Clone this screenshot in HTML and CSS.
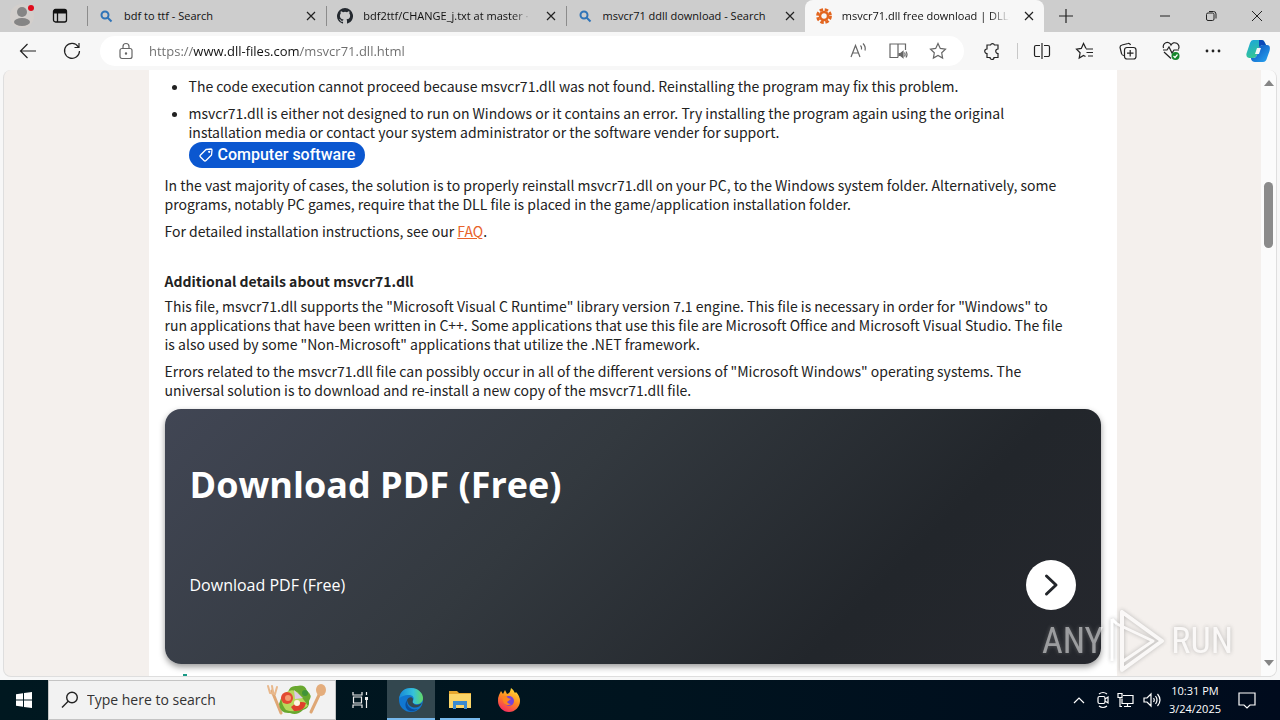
FILE: index.html
```html
<!DOCTYPE html>
<html lang="en">
<head>
<meta charset="utf-8">
<title>msvcr71.dll free download | DLL-files.com</title>
<link rel="stylesheet" href="styles.css">
</head>
<body>
<header class="tabstrip">
  <div class="profile">
    <button class="icon-btn avatar" aria-label="Profile"><svg width="28" height="28" viewBox="0 0 28 28"><circle cx="14" cy="14" r="12" fill="#d3cfcc"/><circle cx="14" cy="10" r="5" fill="#858585"/><ellipse cx="14" cy="20" rx="8" ry="4" fill="#858585"/><circle cx="23" cy="6" r="3" fill="#e00b1c"/></svg></button>
    <button class="icon-btn" aria-label="Tab actions"><svg width="16" height="16" viewBox="0 0 16 16" fill="none" stroke="#111" stroke-width="1.3"><rect x="1.500" y="1.500" width="13" height="12.500" rx="2"/><path d="M5.500 5v9"/><path d="M2 3.500h12" stroke-width="4"/></svg></button>
  </div>
  <nav class="tabs" aria-label="Tabs">
    <div class="tab"><svg class="fav" viewBox="0 0 16 16" fill="none" stroke="#2f74b8" stroke-width="2"><circle cx="7" cy="7" r="3.500"/><path d="M9.500 9.500l4 4"/></svg><button class="tab-title">bdf to ttf - Search</button><button class="close" aria-label="Close tab"><svg viewBox="0 0 10 10"><path d="M1 1l8 8M9 1l-8 8"/></svg></button></div>
    <div class="tab"><svg class="fav" viewBox="0 0 16 16"><path fill="#24292f" d="M8 0a8 8 0 0 0-2.530 15.590c.4.070.55-.17.55-.38v-1.490c-2.230.48-2.700-.95-2.700-.95-.36-.92-.89-1.170-.89-1.170-.73-.5.060-.49.060-.49.800.06 1.220.83 1.220.83.72 1.230 1.880.87 2.340.67.070-.52.280-.87.510-1.070-1.780-.2-3.640-.89-3.640-3.950 0-.87.310-1.590.82-2.150-.08-.2-.36-1.020.08-2.120 0 0 .67-.22 2.200.82a7.600 7.600 0 0 1 4 0c1.530-1.040 2.200-.82 2.200-.82.44 1.100.16 1.920.08 2.120.51.56.82 1.270.82 2.150 0 3.070-1.870 3.750-3.650 3.950.29.250.54.730.54 1.480v2.190c0 .21.150.46.550.38A8 8 0 0 0 8 0z"/></svg><button class="tab-title faded">bdf2ttf/CHANGE_j.txt at master ·</button><button class="close" aria-label="Close tab"><svg viewBox="0 0 10 10"><path d="M1 1l8 8M9 1l-8 8"/></svg></button></div>
    <div class="tab"><svg class="fav" viewBox="0 0 16 16" fill="none" stroke="#2f74b8" stroke-width="2"><circle cx="7" cy="7" r="3.500"/><path d="M9.500 9.500l4 4"/></svg><button class="tab-title">msvcr71 ddll download - Search</button><button class="close" aria-label="Close tab"><svg viewBox="0 0 10 10"><path d="M1 1l8 8M9 1l-8 8"/></svg></button></div>
    <div class="tab active"><svg class="fav" viewBox="0 0 16 16" fill="none" stroke="#e2651f"><circle cx="8" cy="8" r="4" stroke-width="2.500"/><circle cx="8" cy="8" r="6.500" stroke-width="2.800" stroke-dasharray="3.400 1.700"/></svg><button class="tab-title faded">msvcr71.dll free download | DLL-</button><button class="close" aria-label="Close tab"><svg viewBox="0 0 10 10"><path d="M1 1l8 8M9 1l-8 8"/></svg></button></div>
  </nav>
  <button class="new-tab" aria-label="New tab"><svg width="16" height="16" viewBox="0 0 16 16" stroke="#222" stroke-width="1.200"><path d="M8 1v14M1 8h14"/></svg></button>
  <div class="window-controls">
    <button aria-label="Minimize"><svg viewBox="0 0 12 12"><path d="M1 6h10"/></svg></button>
    <button aria-label="Restore"><svg viewBox="0 0 12 12"><rect x="1.500" y="3" width="7.500" height="7.500" rx="1.500"/><path d="M4 1.500h4.500a2.500 2.500 0 0 1 2.500 2.500v4.500"/></svg></button>
    <button aria-label="Close"><svg viewBox="0 0 12 12"><path d="M1 1l10 10M11 1L1 11"/></svg></button>
  </div>
</header>

<div class="toolbar">
  <button class="tool" aria-label="Back"><svg viewBox="0 0 20 20"><path d="M18 10H2.500M9.500 3l-7 7 7 7"/></svg></button>
  <button class="tool reload" aria-label="Refresh"><svg viewBox="0 0 20 20"><path d="M16.300 5.800a7.500 7.500 0 1 0 1.200 4.200M17 2v4.500h-4.500"/></svg></button>
  <div class="address">
    <svg class="lock" viewBox="0 0 20 20"><rect x="4" y="7.500" width="12" height="10" rx="2"/><path d="M7 7.500V5.500a3 3 0 0 1 6 0v2"/><circle cx="10" cy="12.500" r=".6" fill="#666"/></svg>
    <input class="url" type="text" aria-label="Address" value="https://www.dll-files.com/msvcr71.dll.html">
    <button aria-label="Read aloud"><svg viewBox="0 0 20 20"><path d="M3 16L7.500 4.500 12 16M4.500 12h6M12.500 4.500q1.500 1.500 1 4M15 2.500q3 3 2 7"/></svg></button>
    <button aria-label="Immersive reader"><svg viewBox="0 0 20 20"><path d="M10 16.500H2V3h8v13.500M10 3h7.500v6"/><path d="M11 12.500h1.500l2.500-2v6l-2.500-2H11z" fill="#666"/><path d="M16.500 11.500q1.200 2 0 4M18 10.500q2 3 0 6"/></svg></button>
    <button aria-label="Add to favorites"><svg viewBox="0 0 20 20"><path d="M10 2.500l2.300 4.900 5.200.7-3.800 3.700.9 5.300-4.600-2.600-4.600 2.600.9-5.300-3.800-3.700 5.200-.7z"/></svg></button>
  </div>
  <div class="tools">
    <button aria-label="Extensions"><svg viewBox="0 0 20 20"><path d="M5 4h3.500a2.200 2.200 0 0 1 4 0H16v4a2.200 2.200 0 1 0 0 4.500v4h-4a2 2 0 0 1-4 0H5v-4a2.200 2.200 0 1 1 0-4.500z"/></svg></button>
    <span class="rule"></span>
    <button aria-label="Split screen"><svg viewBox="0 0 20 20"><path d="M8 4.500H4a1.500 1.500 0 0 0-1.500 1.500v8A1.500 1.500 0 0 0 4 15.500h4M12 4.500h4a1.500 1.500 0 0 1 1.500 1.500v8a1.500 1.500 0 0 1-1.500 1.500h-4M10 2v16"/></svg></button>
    <button aria-label="Favorites"><svg viewBox="0 0 20 20"><path d="M11 7.500L8.500 2.500 6.300 7.400l-4.800.7 3.600 3.700-.9 5.300 4.300-2.600 2 1M11 8h7M11.500 11.500H18M13 15h5"/></svg></button>
    <button aria-label="Collections"><svg viewBox="0 0 20 20"><path d="M6 14.500a2.500 2.500 0 0 1-2.500-2L2 6.500A2.500 2.500 0 0 1 4 4l6-1.500a2 2 0 0 1 2.500 1.500"/><rect x="6.500" y="6.500" width="11.500" height="11.500" rx="2.500"/><path d="M12.200 9v6.500M9 12.200h6.500"/></svg></button>
    <button aria-label="Browser essentials"><svg viewBox="0 0 20 20"><path d="M2 9h4l2-3 3 6 2-3h5M2.500 7a4 4 0 0 1 7.500-3 4 4 0 0 1 7.500 4M3 11l7 6.500"/><circle cx="14.500" cy="15" r="4" fill="#16852b" stroke="none"/><path d="M12.500 15l1.500 1.500 2.500-3" stroke="#fff"/></svg></button>
    <button aria-label="Settings and more"><svg viewBox="0 0 20 20"><g fill="#222" stroke="none"><circle cx="4" cy="10" r="1.400"/><circle cx="10" cy="10" r="1.400"/><circle cx="16" cy="10" r="1.400"/></g></svg></button>
    <button class="copilot" aria-label="Copilot"><svg viewBox="0 0 24 24"><defs><linearGradient id="cpa" x2=".5" y2="1"><stop stop-color="#1aa5df"/><stop offset="1" stop-color="#38c88f"/></linearGradient><linearGradient id="cpb" x2="1" y2="1"><stop stop-color="#0b48b8"/><stop offset="1" stop-color="#28a8f2"/></linearGradient></defs><path d="M7 1h9q2 0 3 3l1 2h-4q-2 0-3 3l-2 7q-1 3-4 3H3Q-1 18 1 13L4 4q1-3 3-3z" fill="url(#cpa)"/><path d="M13 1h3q2 0 3 3l1 2h-4l-3 2z" fill="#0b48b8"/><path d="M17 23H9q-3 0-4-3v-1h3q2 0 3-3l2-7q1-3 4-3h4q4 0 2.500 6L21 19q-1 4-4 4z" fill="url(#cpb)"/><path d="M11 9h4l-2 6H9z" fill="#f7f7f7"/></svg></button>
  </div>
</div>

<div class="viewport">
  <main class="page">
    <ul>
      <li>The code execution cannot proceed because msvcr71.dll was not found. Reinstalling the program may fix this problem.</li>
      <li>msvcr71.dll is either not designed to run on Windows or it contains an error. Try installing the program again using the original<br> installation media or contact your system administrator or the software vender for support.<br>
        <a class="tag" href="#"><svg width="14" height="14" viewBox="0 0 14 14" fill="none" stroke="#fff" stroke-width="1.300" stroke-linejoin="round"><path d="M7 1.500l5-.5q1 0 1 1l-.5 5L7 12.500q-1 1-2 0L1.500 9q-1-1 0-2z"/><circle cx="10.200" cy="3.800" r=".5"/></svg>Computer software</a></li>
    </ul>
    <p>In the vast majority of cases, the solution is to properly reinstall msvcr71.dll on your PC, to the Windows system folder. Alternatively, some<br> programs, notably PC games, require that the DLL file is placed in the game/application installation folder.</p>
    <p>For detailed installation instructions, see our <a class="faq" href="#">FAQ</a>.</p>
    <h2>Additional details about msvcr71.dll</h2>
    <p>This file, msvcr71.dll supports the "Microsoft Visual C Runtime" library version 7.1 engine. This file is necessary in order for "Windows" to<br> run applications that have been written in C++. Some applications that use this file are Microsoft Office and Microsoft Visual Studio. The file<br> is also used by some "Non-Microsoft" applications that utilize the .NET framework.</p>
    <p>Errors related to the msvcr71.dll file can possibly occur in all of the different versions of "Microsoft Windows" operating systems. The<br> universal solution is to download and re-install a new copy of the msvcr71.dll file.</p>
    <a class="card" href="#">
      <strong>Download PDF (Free)</strong>
      <span class="card-row"><span>Download PDF (Free)</span><span class="go"><svg width="50" height="50" viewBox="0 0 50 50"><path d="M20.500 16l9.500 9-9.500 9" fill="none" stroke="#23262b" stroke-width="3" stroke-linecap="round" stroke-linejoin="round"/></svg></span></span>
    </a>
    <span class="next-mark"></span>
  </main>
  <div class="scrollbar"><svg width="10" height="6" viewBox="0 0 10 6"><path d="M5 0l5 6H0z"/></svg><span class="thumb"></span><svg width="10" height="6" viewBox="0 0 10 6"><path d="M0 0h10L5 6z"/></svg></div>
  <div class="watermark"><span>ANY</span><svg width="58" height="66" viewBox="0 0 58 66" fill="none" stroke="#fff" stroke-width="4" stroke-linejoin="round"><path d="M14 4v58l40-29z"/><path d="M4 11v42M4 11l5 5M9 16l36 17L14 54" stroke-width="3"/></svg><span>RUN</span></div>
</div>

<footer class="taskbar">
  <button class="start" aria-label="Start"><svg width="16" height="16" viewBox="0 0 16 16" fill="#fff"><path d="M0 2.200l7-1v6.300H0zM8 1l8-1v7.500H8zM0 8.500h7v6.300l-7-1zM8 8.500h8V16l-8-1z"/></svg></button>
  <label class="search">
    <svg width="18" height="18" viewBox="0 0 18 18" fill="none" stroke="#222" stroke-width="1.400"><circle cx="11" cy="6.500" r="5.300"/><path d="M7.200 10.300L1 16.500"/></svg>
    <input type="text" aria-label="Search" placeholder="Type here to search">
    <svg width="62" height="34" viewBox="0 0 62 34"><g stroke="#dfa775" stroke-width="3" stroke-linecap="round"><path d="M7 8l9 22"/><path d="M55 10L46 29"/></g><path d="M3 3l2 7 5 1 2-7M7 3l1 6" fill="none" stroke="#e8b88c" stroke-width="2" stroke-linecap="round"/><ellipse cx="56" cy="7" rx="5" ry="6" fill="#e4ad7c"/><path d="M14 21q3-11 9-12 2-7 9-6 8-2 10 5 6 4 2 10 1 7-6 9-6 6-13 3-10 1-11-9z" fill="#69a82f"/><path d="M20 10q8-6 14 1t9 12q-12 8-22 4-8-10-1-17z" fill="#b9d85b"/><circle cx="22" cy="15" r="6" fill="#e34a32"/><circle cx="23" cy="15" r="3" fill="#f49b70"/><path d="M26 24q8-7 15-4-2 9-12 8z" fill="#df3f2b"/><path d="M29 7l9 8-8 1z" fill="#dccbe5"/><circle cx="32" cy="20" r="3" fill="#fff4e0"/><circle cx="40" cy="10" r="3" fill="#419339"/></svg>
  </label>
  <button class="app task-view" aria-label="Task View"><svg width="18" height="18" viewBox="0 0 18 18" fill="none" stroke="#eee" stroke-width="1.200"><path d="M2 1v3h9V1M2 17v-3h9v3M2.500 6h8v6h-8zM15.500 1v3M15.500 9v8"/><path d="M14 6h3v3h-3z" fill="#eee" stroke="none"/></svg></button>
  <button class="app current" aria-label="Microsoft Edge"><svg width="26" height="26" viewBox="0 0 26 26"><defs><linearGradient id="eda" x2="1"><stop stop-color="#1688d8"/><stop offset=".6" stop-color="#35c1db"/><stop offset="1" stop-color="#63d964"/></linearGradient></defs><circle cx="13" cy="13" r="12" fill="#1177d1"/><path d="M1 12C2 4 7 1 13 1c7 0 12 5 12 10 0 4-3 6-6 6-4 0-5-2-4-3 2-4-1-6-4-6-5 0-9 2-10 4z" fill="url(#eda)"/><path d="M9 13c1-3 5-4 6-1 0 2-1 3 0 4 2 3 6 2 9 0-3 7-14 6-15-3z" fill="#34474f"/><path d="M9 13c-1 6 4 11 11 9-8 6-16-1-11-9z" fill="#0a4e9d"/></svg></button>
  <button class="app running" aria-label="File Explorer"><svg width="22" height="20" viewBox="0 0 22 20"><path d="M0 1h8l2 2h12v4H0z" fill="#e6a72e"/><path d="M0 4h22v14H0z" fill="#fbd568"/><path d="M4 19v-8h14v8h-3v-4H7v4z" fill="#3a8bd0"/></svg></button>
  <button class="app" aria-label="Firefox"><svg width="24" height="24" viewBox="0 0 24 24"><defs><linearGradient id="ffa" x1=".8" x2=".3" y2="1"><stop stop-color="#ffe33a"/><stop offset=".5" stop-color="#ff8a1f"/><stop offset="1" stop-color="#f52a62"/></linearGradient></defs><path d="M2 7l2-4 2 3 2-4 2 4q3 0 4-6 3 2 4 5l1-1q4 4 4 9c0 6-5 11-11 11S1 19 1 13q0-4 1-6z" fill="url(#ffa)"/><circle cx="12" cy="13" r="5" fill="#7543d8"/><path d="M5 8q4-1 6 2l3 1-4 3q1 2 4 2-6 3-8-3z" fill="#ff851f"/></svg></button>
  <div class="tray">
    <svg width="12" height="18" viewBox="0 0 12 18"><path d="M1 12l5-5 5 5"/></svg>
    <svg width="12" height="18" viewBox="0 0 12 18"><rect x="1" y="5.500" width="7" height="7" rx="1.500"/><path d="M8 8l3-2v6l-3-2M2 3q4-3 8 0M2 15q4 3 8 0"/></svg>
    <svg width="18" height="18" viewBox="0 0 18 18"><path d="M6 4.500h10v8H5v-5M10.500 12.500v3M7 15.500h7M1 2.500h4v4H1zM3 6.500v9h2"/></svg>
    <svg width="18" height="18" viewBox="0 0 18 18"><path d="M1 7h3l4-4v12l-4-4H1zM10.500 7q1.500 2 0 4M12.500 5q3 4 0 8M14.500 3q5 6 0 12"/></svg>
    <time class="clock"><span>10:31 PM</span><span>3/24/2025</span></time>
    <svg class="note" width="18" height="18" viewBox="0 0 18 18"><path d="M1 2h16v12h-5l-3 3-3-3H1z"/></svg>
  </div>
</footer>
</body>
</html>
```

FILE: styles.css
```css
* { box-sizing: border-box; }

body {
  margin: 0;
  height: 100vh;
  display: grid;
  grid-template-rows: 32px 38px minmax(0, 1fr) 40px;
  background: #f7f7f7;
  font-family: "Open Sans", "Noto Sans", sans-serif;
  color: #222;
  overflow: hidden;
}

button {
  padding: 0;
  border: 0;
  background: none;
  color: inherit;
  font: inherit;
}

/* Tab strip */
.tabstrip { display: flex; background: #cdcdcd; }
.profile { display: flex; align-items: center; gap: 16px; width: 87px; padding-left: 8px; }
.icon-btn { display: flex; }
.tabs { display: flex; flex: 0 1 957px; min-width: 0; }
.tab {
  display: flex;
  flex: 1;
  align-items: center;
  gap: 10px;
  min-width: 0;
  padding: 0 6px 0 11px;
  background: linear-gradient(#8c8c8c, #8c8c8c) left center / 1px 20px no-repeat;
}
.tab.active { background: #f7f7f7; border-radius: 8px 8px 0 0; }
.fav { flex: none; width: 16px; height: 16px; }
.tab-title {
  flex: 1;
  min-width: 0;
  overflow: hidden;
  white-space: nowrap;
  text-align: left;
  font-size: 11px;
  line-height: 20px;
  color: #111;
}
.faded { mask-image: linear-gradient(90deg, #000 88%, transparent); }
.close { display: flex; padding: 4px; }
.close svg { width: 10px; height: 10px; stroke: #222; stroke-width: 1.2; }
.new-tab { display: flex; align-items: center; padding: 0 14px; }
.window-controls { display: flex; margin-left: auto; }
.window-controls button { width: 46px; }
.window-controls svg { width: 12px; height: 12px; fill: none; stroke: #222; }

/* Toolbar */
.toolbar { display: flex; align-items: center; padding: 0 10px 0 18px; }
.toolbar svg { display: block; width: 20px; height: 20px; fill: none; stroke: #222; stroke-width: 1.2; }
.tool { margin-right: 24px; }
.tool.reload { margin-right: 18px; }
.address {
  display: flex;
  flex: 1;
  align-items: center;
  gap: 20px;
  height: 30px;
  min-width: 0;
  padding: 0 16px;
  border-radius: 15px;
  background: #fff;
}
.address svg { stroke: #666; }
.address .lock { flex: none; width: 20px; margin-right: -7px; }
.url {
  flex: 1;
  min-width: 0;
  padding: 0;
  border: 0;
  outline: 0;
  font: 13px/20px "Open Sans", sans-serif;
  color: transparent;
  background: linear-gradient(90deg, #6c6c6c 44px, #111 44px 151px, #6c6c6c 151px);
  background-clip: text;
}
.tools { display: flex; align-items: center; justify-content: space-between; width: 288px; margin-left: 18px; }
.rule { width: 1px; height: 16px; margin: 0 -8px; background: #c8c8c8; }
.toolbar .copilot svg { width: 24px; height: 24px; stroke: none; }

/* Browser viewport */
.viewport {
  position: relative;
  display: flex;
  margin: 0 3px 3px;
  border: 1px solid #dedede;
  border-top: 0;
  border-radius: 8px;
  background: #f4f0ed;
  overflow: hidden;
}
.page {
  flex: none;
  width: 77%;
  max-width: 968px;
  margin: 0 auto;
  padding: 7px 16px 0;
  background: #fff;
  font-family: "Noto Sans CJK JP", "Noto Sans CJK SC", sans-serif;
  font-size: 14px;
  line-height: 19px;
}
.page ul { margin: 0 0 8px; padding-left: 24px; }
.page li { margin-bottom: 8px; }
.page p { margin: 0 0 8px; }
.page h2 { margin: 31px 0 6px; font-size: 14px; line-height: 19px; }
.faq { color: #e8622a; }
.tag {
  display: inline-flex;
  align-items: center;
  gap: 5px;
  height: 26px;
  padding: 0 10px;
  border-radius: 13px;
  background: #0b57d0;
  color: #fff;
  font: 500 16px/26px Roboto, sans-serif;
  text-decoration: none;
}
.card {
  display: flex;
  flex-direction: column;
  justify-content: space-between;
  height: 255px;
  margin-top: 9px;
  padding: 50px 25px 54px;
  border-radius: 16px;
  background: linear-gradient(135deg, #414654, #33393f 40%, #22262b 75%, #25272d);
  box-shadow: 0 3px 6px rgba(0, 0, 0, .4);
  color: #fff;
  font-family: "Open Sans", sans-serif;
  text-decoration: none;
}
.card strong { font-size: 36px; line-height: 52px; }
.card-row { display: flex; align-items: center; justify-content: space-between; font-size: 16px; line-height: 24px; }
.go { display: flex; border-radius: 50%; background: #fff; }
.next-mark { display: block; width: 4px; height: 2px; margin: 10px 0 0 18px; background: #199a86; }
.scrollbar {
  display: flex;
  flex-direction: column;
  align-items: center;
  width: 15px;
  padding: 10px 0;
  background: #fbfbfb;
  fill: #858585;
}
.thumb { width: 9px; height: 66px; margin: 96px 0 auto; border-radius: 5px; background: #8b8b8b; }
.watermark {
  position: absolute;
  right: 43px;
  bottom: 2px;
  display: flex;
  align-items: center;
  gap: 5px;
  color: #fff;
  font: 36px/40px "Roboto Condensed", Roboto, sans-serif;
  opacity: .55;
  filter: drop-shadow(0 0 2px #888);
  pointer-events: none;
}

/* Taskbar */
.taskbar { display: flex; background: linear-gradient(90deg, #001820, #00141f 50%, #000b1d); color: #fff; }
.start { display: flex; align-items: center; justify-content: center; width: 48px; }
.search {
  display: flex;
  align-items: center;
  width: 288px;
  padding: 0 8px 0 12px;
  border: 1px solid #c4c4c4;
  background: #f2f2f2;
}
.search input {
  flex: 1;
  min-width: 0;
  padding: 0 0 0 8px;
  border: 0;
  outline: 0;
  background: none;
  font: 14px/20px "Open Sans", sans-serif;
}
.search input::placeholder { color: #333; }
.app { display: flex; align-items: center; justify-content: center; width: 48px; margin-right: 1px; }
.task-view { margin-right: 3px; }
.app.current { background: #33474f; border-bottom: 2px solid #76b9ed; border-top: 2px solid #33474f; }
.app.running { background: linear-gradient(#76b9ed, #76b9ed) center bottom / 40px 2px no-repeat; }
.tray { display: flex; align-items: center; gap: 8px; margin-left: auto; padding-right: 24px; }
.tray svg { fill: none; stroke: #fff; stroke-width: 1.2; }
.tray .note { margin-left: 9px; }
.tray svg:first-child { margin-right: 4px; }
.clock { display: flex; flex-direction: column; align-items: center; font-size: 11px; line-height: 18px; }
```
